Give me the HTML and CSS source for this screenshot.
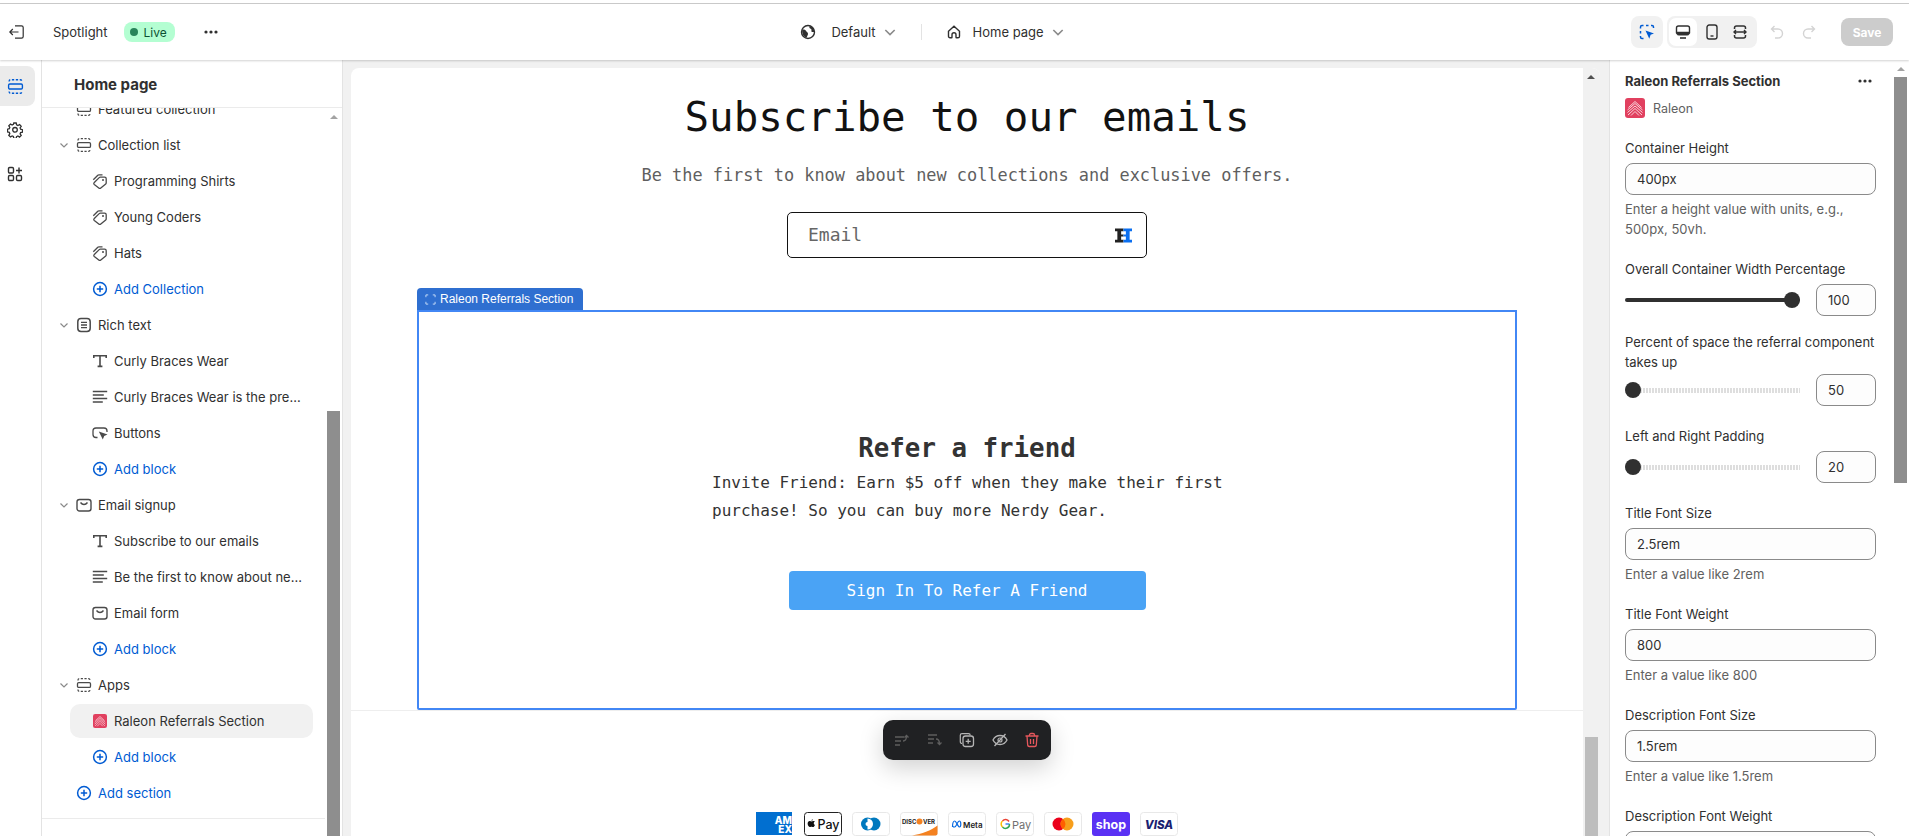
FILE: index.html
```html
<!doctype html>
<html lang="en">
  <head>
    <meta charset="UTF-8" />
    <title>Home page - Theme editor</title>
    <link rel="stylesheet" href="styles.css">
  </head>
  <body>
    <!-- icon sprite -->
    <svg class="sprite" xmlns="http://www.w3.org/2000/svg">
      <symbol id="i-section" viewBox="0 0 16 16">
        <rect x="1.500" y="5.600" width="13" height="4.800" rx="1.200" fill="none" stroke="currentColor" stroke-width="1.300"/>
        <path d="M2 3.400v-.4c0-.8.700-1.400 1.500-1.400h9c.8 0 1.500.6 1.500 1.400v.4M2 12.600v.4c0 .8.700 1.400 1.500 1.400h9c.8 0 1.500-.6 1.500-1.400v-.4" fill="none" stroke="currentColor" stroke-width="1.300" stroke-dasharray="2.200 1.500"/>
      </symbol>
      <symbol id="i-tag" viewBox="0 0 16 16">
        <path d="M2.300 9.500 7.200 4.600c.3-.3.7-.5 1.100-.5h4.300c.9 0 1.600.7 1.600 1.600v4.300c0 .4-.2.8-.5 1.100l-4.900 4c-.6.5-1.400.5-2 0l-4.500-3.500c-.7-.6-.7-1.500 0-2.100Z" fill="none" stroke="currentColor" stroke-width="1.300"/>
        <path d="M1.300 6.800 5.800 2.300c.3-.3.700-.5 1.100-.5h3.600" fill="none" stroke="currentColor" stroke-width="1.300"/>
        <circle cx="11" cy="7" r="1" fill="currentColor"/>
      </symbol>
      <symbol id="i-plus" viewBox="0 0 16 16">
        <circle cx="8" cy="8" r="6.400" fill="none" stroke="currentColor" stroke-width="1.500"/>
        <path d="M8 4.800v6.400M4.800 8h6.400" stroke="currentColor" stroke-width="1.500"/>
      </symbol>
      <symbol id="i-chevron" viewBox="0 0 12 12">
        <path d="m2.500 4.500 3.500 3.500 3.500-3.500" fill="none" stroke="currentColor" stroke-width="1.200"/>
      </symbol>
      <symbol id="i-richtext" viewBox="0 0 16 16">
        <rect x="1.800" y="1.500" width="12.400" height="13" rx="3.200" fill="none" stroke="currentColor" stroke-width="1.500"/>
        <path d="M5 5.300h6M5 8h6M5 10.700h6" stroke="currentColor" stroke-width="1.300"/>
      </symbol>
      <symbol id="i-t" viewBox="0 0 16 16">
        <path d="M1.800 5V2.800h12.400V5M8 2.800v10.600M5.600 13.400h4.800" fill="none" stroke="currentColor" stroke-width="1.600"/>
      </symbol>
      <symbol id="i-lines" viewBox="0 0 16 16">
        <path d="M.8 2.500h14.400M.8 6h11M.8 9.500h14.400M.8 13h10" stroke="currentColor" stroke-width="1.300"/>
      </symbol>
      <symbol id="i-button" viewBox="0 0 16 16">
        <path d="M5.500 12.500H4C2.300 12.500 1 11.200 1 9.500V6c0-1.700 1.300-3 3-3h8c1.700 0 3 1.300 3 3v1" fill="none" stroke="currentColor" stroke-width="1.300"/>
        <path d="m6.800 6.500 8.700 3-3.300 1.400-1.400 3.700Z" fill="currentColor"/>
      </symbol>
      <symbol id="i-mail" viewBox="0 0 16 16">
        <rect x="1" y="2.500" width="14" height="11.500" rx="2.500" fill="none" stroke="currentColor" stroke-width="1.400"/>
        <path d="M4.500 5.500c1 1.300 2.200 2 3.500 2s2.500-.7 3.500-2" fill="none" stroke="currentColor" stroke-width="1.400"/>
      </symbol>
      <symbol id="i-raleon" viewBox="0 0 20 20">
        <rect width="20" height="20" rx="3" fill="#e1405f"/>
        <path d="M3.500 9.500 10 3.500l6.500 6M2.500 12 10 5.500l7.500 6.500M2.500 14.500 10 8l7.500 6.500M3 17 10 10.500l7 6.500M6 17.500l4-4 4 4" fill="none" stroke="#f9d3da" stroke-width="1"/>
      </symbol>
      <symbol id="i-dots" viewBox="0 0 16 16">
        <circle cx="3" cy="8" r="1.600" fill="currentColor"/><circle cx="8" cy="8" r="1.600" fill="currentColor"/><circle cx="13" cy="8" r="1.600" fill="currentColor"/>
      </symbol>
    </svg>

    <div class="top-line"></div>

    <header class="topbar">
      <div class="topbar-left">
        <svg class="icon-16 exit" viewBox="0 0 16 16"><path d="M6 1.800h6.500c.9 0 1.700.8 1.700 1.700v9c0 .9-.8 1.700-1.700 1.700H6M9.500 8H.8M3.800 5 .8 8l3 3" fill="none" stroke="currentColor" stroke-width="1.200"/></svg>
        <span class="store-name">Spotlight</span>
        <span class="live-pill"><i class="live-dot"></i>Live</span>
        <svg class="icon-16 top-dots"><use href="#i-dots"/></svg>
      </div>
      <div class="topbar-center">
        <svg class="icon-16" viewBox="0 0 16 16"><circle cx="8" cy="8" r="6.500" fill="none" stroke="currentColor" stroke-width="1.400"/><path d="M2.200 5.500c1.800-.3 3.600.2 4 1.500.3 1.200 1.800 1.300 1.800 2.700 0 1.300-.8 2-1.300 3.800-2.500-.3-5-3-4.500-8ZM9.800 2c-.8 1.200-.5 2.300.8 2.700 1 .3 1 1.300.8 2.200-.2 1 1.300 1.300 3 1.100 0-2.700-1.800-5.200-4.600-6Z" fill="currentColor"/></svg>
        <span class="ctx-label default-label">Default</span>
        <svg class="chev"><use href="#i-chevron"/></svg>
        <span class="ctx-divider"></span>
        <svg class="icon-16" viewBox="0 0 16 16"><path d="M2.500 7.200 8 2.300l5.500 4.900v5c0 .9-.7 1.600-1.500 1.600h-1.500c-.3 0-.5-.2-.5-.5v-2.500a2 2 0 0 0-4 0v2.500c0 .3-.2.500-.5.500H4c-.8 0-1.500-.7-1.500-1.600Z" fill="none" stroke="currentColor" stroke-width="1.400"/></svg>
        <span class="ctx-label">Home page</span>
        <svg class="chev"><use href="#i-chevron"/></svg>
      </div>
      <div class="topbar-right">
        <div class="tool-group inspector">
          <svg class="icon-16 blue" viewBox="0 0 16 16"><path d="M1.500 4.500V3c0-.8.6-1.500 1.500-1.500h1.500M7 1.500h2.500M12 1.500h1c.8 0 1.500.7 1.500 1.500v1M1.500 7v2.500M1.500 12v1c0 .8.6 1.500 1.500 1.500h1.500" fill="none" stroke="currentColor" stroke-width="1.500"/><path d="m6.500 6.500 8.500 3-3.400 1.300-1.300 3.900Z" fill="currentColor"/></svg>
        </div>
        <div class="tool-group devices">
          <span class="device active">
            <svg class="icon-16" viewBox="0 0 16 16"><path d="M1.500 8.500V4c0-1.100.9-2 2-2h9c1.100 0 2 .9 2 2v4.500Z" fill="none" stroke="currentColor" stroke-width="1.400"/><path d="M1.500 8.500h13V9c0 1.100-.9 2-2 2h-9c-1.100 0-2-.9-2-2Z" fill="currentColor" stroke="currentColor" stroke-width="1"/><path d="M5 14h6" stroke="currentColor" stroke-width="1.600"/></svg>
          </span>
          <span class="device">
            <svg class="icon-16" viewBox="0 0 16 16"><rect x="3" y="1" width="10" height="14" rx="2.200" fill="none" stroke="currentColor" stroke-width="1.400"/><path d="M6.500 12h3" stroke="currentColor" stroke-width="1.400"/></svg>
          </span>
          <span class="device">
            <svg class="icon-16" viewBox="0 0 16 16"><path d="M2.500 5V4c0-1 .8-2 2-2h7c1.200 0 2 1 2 2v1M2.500 11v1c0 1 .8 2 2 2h7c1.200 0 2-1 2-2v-1" fill="none" stroke="currentColor" stroke-width="1.500"/><path d="M2 8h12M4 6 2 8l2 2M12 6l2 2-2 2" fill="none" stroke="currentColor" stroke-width="1.400"/></svg>
          </span>
        </div>
        <svg class="icon-16 faded undo" viewBox="0 0 16 16"><path d="M5.500 2 2.500 5l3 3M2.500 5h6.500a4.500 4.500 0 0 1 0 9H6" fill="none" stroke="currentColor" stroke-width="1.400"/></svg>
        <svg class="icon-16 faded redo" viewBox="0 0 16 16"><path d="M10.500 2l3 3-3 3M13.500 5H7a4.500 4.500 0 0 0 0 9h3" fill="none" stroke="currentColor" stroke-width="1.400"/></svg>
        <button class="save-btn">Save</button>
      </div>
    </header>

    <div class="workspace">
      <nav class="rail">
        <span class="rail-btn active">
          <svg class="icon-17" viewBox="0 0 16 16"><use href="#i-section"/></svg>
        </span>
        <span class="rail-btn">
          <svg class="icon-16" viewBox="0 0 16 16"><path d="M6.800 1h2.400l.4 1.900 1.300.6 1.700-1 1.600 1.800-1.100 1.600.5 1.300 1.900.5v2.400l-1.900.4-.5 1.300 1.100 1.600-1.700 1.700-1.600-1.100-1.300.6-.4 1.800H6.800l-.4-1.900-1.300-.5-1.600 1-1.700-1.700 1-1.600-.5-1.300-1.800-.4V7.200l1.800-.5.500-1.300-1-1.600 1.700-1.800 1.600 1 1.300-.6Z" fill="none" stroke="currentColor" stroke-width="1.300"/><circle cx="8" cy="7.800" r="2.300" fill="none" stroke="currentColor" stroke-width="1.300"/></svg>
        </span>
        <span class="rail-btn">
          <svg class="icon-16" viewBox="0 0 16 16"><rect x="1.500" y="1.500" width="5" height="5.500" rx="1.200" fill="none" stroke="currentColor" stroke-width="1.400"/><rect x="1.500" y="9.500" width="5" height="5" rx="1.200" fill="none" stroke="currentColor" stroke-width="1.400"/><rect x="9.500" y="9.500" width="5" height="5" rx="1.200" fill="none" stroke="currentColor" stroke-width="1.400"/><path d="M12 1.500v6M9 4.500h6" stroke="currentColor" stroke-width="1.400"/></svg>
        </span>
      </nav>

      <aside class="sidebar">
        <h2 class="sidebar-title">Home page</h2>
        <div class="tree-wrap">
          <ul class="tree">
            <li class="row section"><span class="chev-slot"></span><svg class="row-icon"><use href="#i-section"/></svg>Featured collection</li>
            <li class="row section"><svg class="chev"><use href="#i-chevron"/></svg><svg class="row-icon"><use href="#i-section"/></svg>Collection list</li>
            <li class="row child"><svg class="row-icon"><use href="#i-tag"/></svg>Programming Shirts</li>
            <li class="row child"><svg class="row-icon"><use href="#i-tag"/></svg>Young Coders</li>
            <li class="row child"><svg class="row-icon"><use href="#i-tag"/></svg>Hats</li>
            <li class="row child add"><svg class="row-icon"><use href="#i-plus"/></svg>Add Collection</li>
            <li class="row section"><svg class="chev"><use href="#i-chevron"/></svg><svg class="row-icon"><use href="#i-richtext"/></svg>Rich text</li>
            <li class="row child"><svg class="row-icon"><use href="#i-t"/></svg>Curly Braces Wear</li>
            <li class="row child"><svg class="row-icon"><use href="#i-lines"/></svg>Curly Braces Wear is the pre...</li>
            <li class="row child"><svg class="row-icon"><use href="#i-button"/></svg>Buttons</li>
            <li class="row child add"><svg class="row-icon"><use href="#i-plus"/></svg>Add block</li>
            <li class="row section"><svg class="chev"><use href="#i-chevron"/></svg><svg class="row-icon"><use href="#i-mail"/></svg>Email signup</li>
            <li class="row child"><svg class="row-icon"><use href="#i-t"/></svg>Subscribe to our emails</li>
            <li class="row child"><svg class="row-icon"><use href="#i-lines"/></svg>Be the first to know about ne...</li>
            <li class="row child"><svg class="row-icon"><use href="#i-mail"/></svg>Email form</li>
            <li class="row child add"><svg class="row-icon"><use href="#i-plus"/></svg>Add block</li>
            <li class="row section"><svg class="chev"><use href="#i-chevron"/></svg><svg class="row-icon"><use href="#i-section"/></svg>Apps</li>
            <li class="row child selected"><svg class="row-icon"><use href="#i-raleon"/></svg>Raleon Referrals Section</li>
            <li class="row child add"><svg class="row-icon"><use href="#i-plus"/></svg>Add block</li>
            <li class="row section add"><svg class="row-icon"><use href="#i-plus"/></svg>Add section</li>
          </ul>
          <div class="tree-divider"></div>
          <div class="tree-scroll"><span class="arrow-up"></span><span class="tree-thumb"></span></div>
        </div>
      </aside>

      <main class="preview">
        <div class="preview-page">
          <section class="newsletter">
            <h1 class="news-title">Subscribe to our emails</h1>
            <p class="news-sub">Be the first to know about new collections and exclusive offers.</p>
            <div class="news-input">
              <span class="news-placeholder">Email</span>
              <svg class="pw-icon" viewBox="0 0 18 15"><path d="M0 0h9v3H6.500v3.500H9v2H6.500V12H9v3H0v-3h2.500V3H0Z" fill="#222"/><path d="M9 0h9v3h-2.500v9H18v3H9v-3h2.500V8.500H9v-2h2.500V3H9Z" fill="#0b6ff0"/></svg>
            </div>
            <div class="selected-block">
              <div class="block-tab">
                <svg class="tab-icon" viewBox="0 0 12 12"><path d="M1 3.500V1h2.500M8.500 1H11v2.500M11 8.500V11H8.500M3.500 11H1V8.500" fill="none" stroke="#cfe2fb" stroke-width="1"/></svg>
                Raleon Referrals Section
              </div>
              <div class="block-box">
                <div class="refer">
                  <h2 class="refer-title">Refer a friend</h2>
                  <p class="refer-text">Invite Friend: Earn $5 off when they make their first purchase! So you can buy more Nerdy Gear.</p>
                  <a class="refer-btn">Sign In To Refer A Friend</a>
                </div>
              </div>
            </div>
          </section>

          <footer class="payments">
            <svg class="pay amex" viewBox="0 0 38 24"><rect width="36" height="23" fill="#016fd0"/><text x="36" y="11.500" text-anchor="end" class="pay-amex">AM</text><text x="36" y="21" text-anchor="end" class="pay-amex">EX</text></svg>
            <svg class="pay apple" viewBox="0 0 38 24"><rect x=".5" y=".5" width="37" height="23" rx="3" fill="#fff" stroke="#222"/><path d="M9.500 9c-.9-.1-1.500.5-2 .5-.4 0-1-.5-1.700-.5-1.500.1-2.400 1.300-2.100 3.200.2 1.100 1.100 2.900 2.100 2.900.6 0 .9-.4 1.700-.4s.9.400 1.600.4c.9 0 1.500-1.300 1.800-2.100-1.500-.7-1.500-2.900-.1-3.600-.3-.2-.8-.4-1.300-.4ZM7.600 8.800c.7-.1 1.300-.9 1.200-1.600-.8.100-1.400.900-1.200 1.600Z" fill="#111"/><text x="13.500" y="16.500" class="pay-apple">Pay</text></svg>
            <svg class="pay" viewBox="0 0 38 24"><rect x=".5" y=".5" width="37" height="23" rx="3" fill="#fff" stroke="#e8e8e8"/><circle cx="22" cy="12" r="6.500" fill="#0079be"/><circle cx="15.500" cy="12" r="6.500" fill="#0079be"/><path d="M15.500 6.500a5.500 5.500 0 0 1 0 11Z" fill="#fff"/><circle cx="15.500" cy="12" r="2" fill="#fff"/></svg>
            <svg class="pay" viewBox="0 0 38 24"><rect x=".5" y=".5" width="37" height="23" rx="3" fill="#fff" stroke="#e8e8e8"/><path d="M12 23.500c10-1.500 19-5 25.500-10v8c0 1.100-.9 2-2 2Z" fill="#f48120"/><text x="2" y="12" class="pay-disc">DISC</text><circle cx="19.500" cy="9.500" r="3" fill="#f48120"/><text x="23" y="12" class="pay-disc">VER</text></svg>
            <svg class="pay" viewBox="0 0 38 24"><rect x=".5" y=".5" width="37" height="23" rx="3" fill="#fff" stroke="#e8e8e8"/><path d="M4.500 15c0-3.500 1-6 2.300-6S10 15 11.500 15c1.200 0 1.300-1.300 1.300-3 0-2-.6-3-1.600-3-1.500 0-3 6-4.500 6-1.200 0-2.200-.2-2.200 0Z" fill="none" stroke="#0668e1" stroke-width="1.200"/><text x="15" y="15.500" class="pay-meta">Meta</text></svg>
            <svg class="pay" viewBox="0 0 38 24"><rect x=".5" y=".5" width="37" height="23" rx="3" fill="#fff" stroke="#e8e8e8"/><path d="M13.500 12H9.500" stroke="#4285f4" stroke-width="1.500"/><path d="M13 9.500A4 4 0 0 0 6.500 9" fill="none" stroke="#ea4335" stroke-width="1.500"/><path d="M6.500 9a4 4 0 0 0 0 6" fill="none" stroke="#fbbc04" stroke-width="1.500"/><path d="M6.500 15a4 4 0 0 0 7-3" fill="none" stroke="#34a853" stroke-width="1.500"/><text x="16" y="16.500" class="pay-gpay">Pay</text></svg>
            <svg class="pay" viewBox="0 0 38 24"><rect x=".5" y=".5" width="37" height="23" rx="3" fill="#fff" stroke="#e8e8e8"/><circle cx="15" cy="12" r="6.500" fill="#eb001b"/><circle cx="23" cy="12" r="6.500" fill="#f79e1b"/><path d="M19 6.900a6.500 6.500 0 0 1 0 10.200 6.500 6.500 0 0 1 0-10.200Z" fill="#ff5f00"/></svg>
            <svg class="pay" viewBox="0 0 38 24"><rect width="38" height="24" rx="3" fill="#5a31f4"/><text x="19" y="16.500" text-anchor="middle" class="pay-shop">shop</text></svg>
            <svg class="pay" viewBox="0 0 38 24"><rect x=".5" y=".5" width="37" height="23" rx="3" fill="#fff" stroke="#e8e8e8"/><text x="19" y="16.500" text-anchor="middle" class="pay-visa">VISA</text></svg>
          </footer>

          <div class="float-bar">
            <svg class="icon-16 dim" viewBox="0 0 16 16"><path d="M1 13h5M1 9h6M1 5h9M9 9c2 0 3.500-1.500 3.500-5M10.500 5.500l2-2 2 2" fill="none" stroke="currentColor" stroke-width="1.300"/></svg>
            <svg class="icon-16 dim" viewBox="0 0 16 16"><path d="M1 3h9M1 7h6M1 11h5M9 7c2 0 3.500 1.500 3.500 5M10.500 10.500l2 2 2-2" fill="none" stroke="currentColor" stroke-width="1.300"/></svg>
            <svg class="icon-16 soft" viewBox="0 0 16 16"><path d="M3 11.500c-1 0-1.700-.7-1.700-1.700V3.300C1.300 2.300 2 1.600 3 1.600h6.500c1 0 1.700.7 1.700 1.700" fill="none" stroke="currentColor" stroke-width="1.200"/><rect x="4" y="4" width="10.500" height="10.500" rx="2.500" fill="none" stroke="currentColor" stroke-width="1.300"/><path d="M9.200 6.800v5M6.700 9.300h5" stroke="currentColor" stroke-width="1.300"/></svg>
            <svg class="icon-16 soft" viewBox="0 0 16 16"><path d="M1 8c1.500-3 4-4.500 7-4.500S13.500 5 15 8c-1.500 3-4 4.500-7 4.500S2.500 11 1 8Z" fill="none" stroke="currentColor" stroke-width="1.300"/><circle cx="8" cy="8" r="2" fill="none" stroke="currentColor" stroke-width="1.200"/><path d="M13.500 2 2.500 14" stroke="currentColor" stroke-width="1.300"/></svg>
            <svg class="icon-16 danger" viewBox="0 0 16 16"><path d="M1.500 4h13M5.500 4V3c0-.8.6-1.500 1.500-1.500h2c.9 0 1.500.7 1.500 1.500v1M3 4l.7 9.200c.1.800.7 1.300 1.500 1.300h5.600c.8 0 1.400-.5 1.500-1.300L13 4M6.500 7v5M9.500 7v5" fill="none" stroke="currentColor" stroke-width="1.300"/></svg>
          </div>
        </div>
        <div class="preview-scroll"><span class="arrow-up dark"></span><span class="preview-thumb"></span></div>
      </main>

      <aside class="settings">
        <div class="settings-body">
          <div class="settings-head">
            <h3>Raleon Referrals Section</h3>
            <svg class="icon-16 head-dots"><use href="#i-dots"/></svg>
          </div>
          <div class="app-line"><svg class="app-logo"><use href="#i-raleon"/></svg>Raleon</div>

          <div class="field">
            <label>Container Height</label>
            <input class="text-input" value="400px" />
            <p class="help">Enter a height value with units, e.g., 500px, 50vh.</p>
          </div>
          <div class="field">
            <label>Overall Container Width Percentage</label>
            <div class="slider-row">
              <div class="slider full"><span class="knob"></span></div>
              <input class="num-input" value="100" />
            </div>
          </div>
          <div class="field tight">
            <label>Percent of space the referral component takes up</label>
            <div class="slider-row">
              <div class="slider"><span class="knob"></span></div>
              <input class="num-input" value="50" />
            </div>
          </div>
          <div class="field">
            <label>Left and Right Padding</label>
            <div class="slider-row">
              <div class="slider"><span class="knob"></span></div>
              <input class="num-input" value="20" />
            </div>
          </div>
          <div class="field">
            <label>Title Font Size</label>
            <input class="text-input" value="2.5rem" />
            <p class="help">Enter a value like 2rem</p>
          </div>
          <div class="field">
            <label>Title Font Weight</label>
            <input class="text-input" value="800" />
            <p class="help">Enter a value like 800</p>
          </div>
          <div class="field">
            <label>Description Font Size</label>
            <input class="text-input" value="1.5rem" />
            <p class="help">Enter a value like 1.5rem</p>
          </div>
          <div class="field">
            <label>Description Font Weight</label>
            <input class="text-input" value="400" />
          </div>
        </div>
        <div class="settings-scroll"><span class="arrow-up"></span><span class="settings-thumb"></span></div>
      </aside>
    </div>
  </body>
</html>
```

FILE: styles.css
```css
* {
  box-sizing: border-box;
}

html,
body {
  height: 100%;
}

body {
  margin: 0;
  height: 836px;
  overflow: hidden;
  background-color: #f1f1f1;
  color: #303030;
  font-family: Inter, "Noto Sans", sans-serif;
  font-size: 13px;
  display: flex;
  flex-direction: column;
}

.sprite {
  display: none;
}

h1,
h2,
h3,
p,
ul {
  margin: 0;
  padding: 0;
}

ul {
  list-style: none;
}

.icon-16 {
  width: 16px;
  height: 16px;
  flex: none;
}

.icon-17 {
  width: 17px;
  height: 17px;
  flex: none;
}

.chev {
  width: 12px;
  height: 12px;
  flex: none;
  color: #8a8a8a;
}

/* top bar */
.top-line {
  height: 4px;
  flex: none;
  background-color: #fff;
  border-bottom: 1px solid #cccccc;
}

.topbar {
  height: 56px;
  flex: none;
  background-color: #fff;
  box-shadow: 0 1px 2px rgba(0, 0, 0, 0.18);
  position: relative;
  z-index: 2;
  display: grid;
  grid-template-columns: 1fr auto 1fr;
  align-items: center;
  padding: 0 16px 0 9px;
}

.topbar-left,
.topbar-center,
.topbar-right {
  display: flex;
  align-items: center;
}

.exit {
  margin-right: 28px;
}

.store-name {
  color: #303030;
}

.live-pill {
  margin-left: 16px;
  height: 20px;
  width: 51px;
  background-color: #b4fed2;
  border-radius: 8px;
  display: flex;
  align-items: center;
  gap: 6px;
  padding-left: 6px;
  font-size: 12px;
  color: #0c5132;
}

.live-dot {
  width: 8px;
  height: 8px;
  border-radius: 50%;
  background-color: #29845a;
}

.top-dots {
  margin-left: 28px;
  color: #303030;
}

.topbar-center {
  margin-right: 38px;
}

.topbar-center .chev {
  width: 16px;
  height: 16px;
  margin: 0 -2px;
}

.ctx-label {
  margin-left: 11px;
  margin-right: 8px;
}

.default-label {
  margin-left: 15px;
}

.ctx-divider {
  width: 1px;
  height: 16px;
  background-color: #e3e3e3;
  margin: 0 24px 0 25px;
}

.topbar-right {
  justify-content: flex-end;
}

.tool-group {
  height: 32px;
  background-color: #f1f1f1;
  border-radius: 8px;
  display: flex;
  align-items: center;
}

.inspector {
  width: 32px;
  justify-content: center;
  margin-right: 4px;
}

.blue {
  color: #005bd3;
}

.devices {
  padding: 2px;
  width: 90px;
}

.device {
  width: 28px;
  height: 28px;
  margin-right: 1px;
  display: flex;
  align-items: center;
  justify-content: center;
  border-radius: 7px;
}

.device.active {
  background-color: #fff;
}

.faded {
  color: #d4d4d4;
}

.undo {
  margin-left: 12px;
}

.redo {
  margin-left: 16px;
}

.save-btn {
  margin-left: 24px;
  width: 52px;
  height: 28px;
  border: none;
  border-radius: 8px;
  background-color: #cccccc;
  color: #fff;
  font-family: inherit;
  font-size: 12px;
  font-weight: 650;
  padding: 0;
}

/* main columns */
.workspace {
  flex: 1;
  min-height: 0;
  display: flex;
}

.rail {
  width: 42px;
  flex: none;
  background-color: #fff;
  border-right: 1px solid #e3e3e3;
  padding-top: 6px;
  display: flex;
  flex-direction: column;
  gap: 4px;
}

.rail-btn {
  width: 35px;
  height: 40px;
  padding-right: 5px;
  display: flex;
  align-items: center;
  justify-content: center;
}

.rail-btn.active {
  background-color: #ebebeb;
  border-radius: 0 8px 8px 0;
  color: #005bd3;
}

.sidebar {
  width: 301px;
  flex: none;
  background-color: #fff;
  border-right: 1px solid #e3e3e3;
  display: flex;
  flex-direction: column;
  min-height: 0;
}

.sidebar-title {
  height: 48px;
  flex: none;
  padding-left: 32px;
  font-size: 15px;
  font-weight: 650;
  line-height: 49px;
  color: #303030;
  background-color: #fff;
  border-bottom: 1px solid #ebebeb;
  position: relative;
  z-index: 1;
}

.tree-wrap {
  flex: 1;
  min-height: 0;
  overflow: hidden;
  position: relative;
}

.tree {
  margin-top: -17px;
}

.row {
  height: 36px;
  display: flex;
  align-items: center;
  white-space: nowrap;
  color: #303030;
}

.row-icon {
  width: 16px;
  height: 16px;
  flex: none;
  margin-left: -1px;
  margin-right: 6px;
  color: #4a4a4a;
}

.section {
  padding-left: 16px;
}

.section .chev,
.chev-slot {
  width: 12px;
  margin-right: 7px;
  flex: none;
}

.section.add {
  padding-left: 35px;
}

.child {
  padding-left: 51px;
}

.add {
  color: #005bd3;
}

.add .row-icon {
  color: #005bd3;
}

.selected {
  position: relative;
  z-index: 0;
}

.selected .row-icon {
  width: 14px;
  height: 14px;
  margin-left: 0;
  margin-right: 7px;
}

.selected::before {
  content: "";
  position: absolute;
  z-index: -1;
  left: 28px;
  width: 243px;
  top: 1px;
  height: 34px;
  border-radius: 10px;
  background-color: #f1f1f1;
}

.tree-divider {
  height: 1px;
  width: 283px;
  margin-top: 7px;
  background-color: #ebebeb;
}

.tree-scroll {
  position: absolute;
  top: 0;
  right: 2px;
  bottom: 0;
  width: 13px;
}

.arrow-up {
  position: absolute;
  left: 3px;
  top: 7px;
  width: 0;
  height: 0;
  border-left: 4px solid transparent;
  border-right: 4px solid transparent;
  border-bottom: 4px solid #a3a3a3;
}

.arrow-up.dark {
  border-bottom-color: #505050;
  top: 7px;
  left: 4px;
}

.tree-thumb {
  position: absolute;
  left: 0;
  right: 0;
  top: 303px;
  bottom: 0;
  background-color: #8e8e8e;
}

/* preview column */
.preview {
  width: 1249px;
  flex: none;
  margin-left: 8px;
  margin-top: 8px;
  background-color: #fff;
  border-radius: 8px 8px 0 0;
  display: flex;
  overflow: hidden;
}

.preview-page {
  flex: 1;
  min-width: 0;
  position: relative;
  font-family: "DejaVu Sans Mono", "Liberation Mono", monospace;
  color: #121212;
}

.newsletter {
  height: 643px;
  border-bottom: 1px solid #eeeeee;
  padding-top: 25px;
  display: flex;
  flex-direction: column;
  align-items: center;
}

.news-title {
  font-size: 40.800px;
  font-weight: 400;
  line-height: 48px;
}

.news-sub {
  margin-top: 23px;
  font-size: 16.900px;
  line-height: 22px;
  color: #5f5f5f;
}

.news-input {
  margin-top: 26px;
  width: 360px;
  height: 46px;
  border: 1px solid #121212;
  border-radius: 5px;
  padding-left: 20px;
  display: flex;
  align-items: center;
  justify-content: space-between;
  font-size: 18px;
  color: #666;
}

.news-placeholder {
  margin-bottom: 2px;
}

.pw-icon {
  width: 17px;
  height: 15px;
  margin-right: 14px;
}

.selected-block {
  margin-top: 30px;
  width: 1100px;
}

.block-tab {
  width: 166px;
  height: 22px;
  border-radius: 4px 4px 0 0;
  background-color: #2f6fd0;
  color: #fff;
  font-family: "Liberation Sans", Arial, sans-serif;
  font-size: 12px;
  display: flex;
  align-items: center;
  gap: 4px;
  padding-left: 8px;
}

.tab-icon {
  width: 11px;
  height: 11px;
}

.block-box {
  height: 400px;
  border: 2px solid #4287f5;
  border-radius: 0 0 2px 2px;
  display: flex;
  justify-content: center;
  padding-top: 120px;
  color: #333;
}

.refer {
  width: 550px;
  padding: 0 20px;
  display: flex;
  flex-direction: column;
}

.refer-title {
  text-align: center;
  font-size: 25.800px;
  font-weight: 700;
  line-height: 32px;
}

.refer-text {
  margin-top: 5px;
  margin-right: -4px;
  font-size: 16px;
  line-height: 28px;
}

.refer-btn {
  margin: 46px auto 0;
  width: 357px;
  height: 39px;
  border-radius: 4px;
  background-color: #4aa3f5;
  color: #fff;
  font-size: 16px;
  display: flex;
  align-items: center;
  justify-content: center;
}

.payments {
  padding-top: 101px;
  display: flex;
  justify-content: center;
  gap: 10px;
}

.pay {
  width: 38px;
  height: 24px;
  flex: none;
}

.pay text {
  font-family: Inter, sans-serif;
}

.pay-amex {
  font-size: 10px;
  font-weight: 800;
  fill: #fff;
}

.pay-apple {
  font-size: 12.500px;
  font-weight: 500;
  fill: #111;
}

.pay-disc {
  font-size: 6px;
  font-weight: 700;
  fill: #222;
}

.pay-meta {
  font-size: 8px;
  font-weight: 600;
  fill: #222;
}

.pay-gpay {
  font-size: 11px;
  fill: #707070;
}

.pay-shop {
  font-size: 12.500px;
  font-weight: 700;
  fill: #fff;
}

.pay-visa {
  font-size: 11.500px;
  font-weight: 800;
  font-style: italic;
  fill: #1a1f71;
}

.float-bar {
  position: absolute;
  left: 532px;
  top: 652px;
  width: 168px;
  height: 40px;
  background-color: #202123;
  border-radius: 10px;
  box-shadow: 0 8px 24px rgba(0, 0, 0, 0.18);
  display: flex;
  align-items: center;
  justify-content: space-between;
  padding: 0 11px;
}

.dim {
  color: #5e5e5e;
}

.soft {
  color: #b5b5b5;
}

.danger {
  color: #e5575c;
}

.preview-scroll {
  width: 17px;
  flex: none;
  background-color: #f1f1f1;
  position: relative;
}

.preview-thumb {
  position: absolute;
  left: 2px;
  right: 2px;
  top: 669px;
  bottom: 0;
  background-color: #bdbdbd;
}

/* settings column */
.settings {
  width: 300px;
  flex: none;
  margin-left: 9px;
  background-color: #fff;
  border-left: 1px solid #e3e3e3;
  display: flex;
  position: relative;
  overflow: hidden;
}

.settings-body {
  width: 285px;
  flex: none;
  padding-left: 15px;
  padding-right: 19px;
}

.settings-head {
  height: 38px;
  padding-top: 4px;
  display: flex;
  align-items: center;
  justify-content: space-between;
}

.settings-head h3 {
  font-size: 13px;
  font-weight: 650;
}

.head-dots {
  margin-right: 3px;
}

.app-line {
  height: 20px;
  display: flex;
  align-items: center;
  gap: 8px;
  color: #616161;
  font-size: 12.500px;
}

.app-logo {
  width: 20px;
  height: 20px;
}

.field {
  margin-top: 20px;
}

.field.tight {
  margin-top: 16px;
}

.field label {
  display: block;
  line-height: 20px;
  color: #303030;
  white-space: normal;
}

.text-input,
.num-input {
  height: 32px;
  border: 1px solid #8a8a8a;
  border-radius: 8px;
  background-color: #fdfdfd;
  font-family: inherit;
  font-size: 13px;
  color: #303030;
  outline: none;
}

.text-input {
  display: block;
  width: 100%;
  margin-top: 5px;
  padding: 0 11px;
}

.help {
  margin-top: 4px;
  line-height: 20px;
  color: #616161;
}

.slider-row {
  margin-top: 5px;
  display: flex;
  align-items: center;
  justify-content: space-between;
}

.tight .slider-row {
  margin-top: 2px;
}

.num-input {
  width: 60px;
  padding: 0 11px;
}

.slider {
  width: 175px;
  height: 5px;
  position: relative;
  background-image: repeating-linear-gradient(90deg, #dedede 0 2px, #ffffff 2px 3px);
}

.slider.full {
  height: 4px;
  background-image: none;
  background-color: #303030;
  border-radius: 2px;
}

.knob {
  position: absolute;
  top: -5.500px;
  left: 0;
  width: 16px;
  height: 16px;
  border-radius: 50%;
  background-color: #303030;
}

.slider.full .knob {
  top: -6px;
  left: auto;
  right: 0;
}

.settings-scroll {
  position: absolute;
  top: 0;
  right: 2px;
  bottom: 0;
  width: 13px;
}

.settings-thumb {
  position: absolute;
  left: 0;
  right: 0;
  top: 17px;
  height: 406px;
  background-color: #8e8e8e;
}
```
